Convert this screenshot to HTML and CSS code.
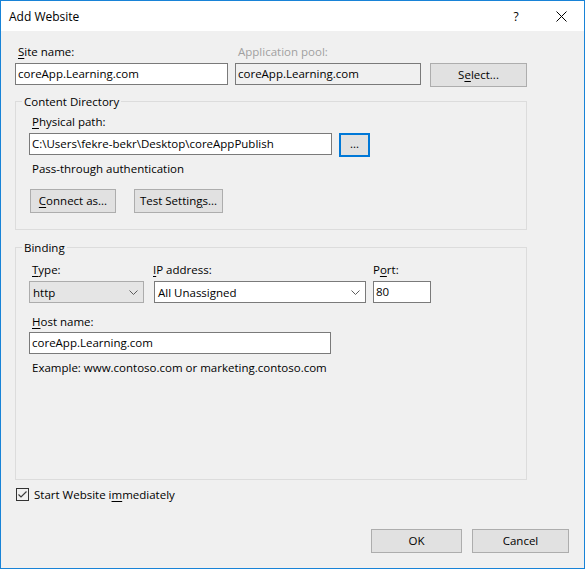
FILE: index.html
```html
<!DOCTYPE html>
<html>
<head>
<meta charset="utf-8">
<title>Add Website</title>
<link rel="stylesheet" href="styles.css">
</head>
<body>
<div class="window">
  <div class="titlebar">
    <div class="title">Add Website</div>
    <div class="tb-help">?</div>
    <div class="tb-close">
      <svg width="11" height="11" viewBox="0 0 11 11"><path d="M0.5 0.5 L10.5 10.5 M10.5 0.5 L0.5 10.5" stroke="#000" stroke-width="1" fill="none"/></svg>
    </div>
  </div>
  <div class="content">
    <div class="site-grid">
      <label class="lbl"><u>S</u>ite name:</label>
      <label class="lbl disabled">Application pool:</label>
      <span></span>
      <div class="field">coreApp.Learning.com</div>
      <div class="field readonly">coreApp.Learning.com</div>
      <div class="btn btn-select">S<u>e</u>lect...</div>
    </div>

    <fieldset class="group group-content">
      <legend class="legend">Content Directory</legend>
      <div class="group-body content-body">
        <label class="lbl"><u>P</u>hysical path:</label>
        <div class="path-row">
          <div class="field path-field">C:\Users\fekre-bekr\Desktop\coreAppPublish</div>
          <div class="btn btn-browse">...</div>
        </div>
        <div class="auth-text">Pass-through authentication</div>
        <div class="btn-row">
          <div class="btn btn-connect"><u>C</u>onnect as...</div>
          <div class="btn btn-test">Test Settin<u>g</u>s...</div>
        </div>
      </div>
    </fieldset>

    <fieldset class="group group-binding">
      <legend class="legend">Binding</legend>
      <div class="group-body binding-body">
        <div class="binding-grid">
          <label class="lbl"><u>T</u>ype:</label>
          <label class="lbl lbl-ip"><u>I</u>P address:</label>
          <label class="lbl lbl-port">P<u>o</u>rt:</label>
          <div class="combo combo-type"><span>http</span>
            <svg class="chev" width="9" height="5" viewBox="0 0 9 5"><path d="M0.5 0.5 L4.5 4.5 L8.5 0.5" stroke="#5c5c5c" fill="none"/></svg>
          </div>
          <div class="combo combo-ip"><span>All Unassigned</span>
            <svg class="chev" width="9" height="5" viewBox="0 0 9 5"><path d="M0.5 0.5 L4.5 4.5 L8.5 0.5" stroke="#5c5c5c" fill="none"/></svg>
          </div>
          <div class="field port-field">80</div>
        </div>
        <label class="lbl lbl-host"><u>H</u>ost name:</label>
        <div class="field host-field">coreApp.Learning.com</div>
        <div class="example">Example: www.contoso.com or marketing.contoso.com</div>
      </div>
    </fieldset>

    <div class="check-row">
      <span class="checkbox">
        <svg width="11" height="11" viewBox="0 0 11 11"><path d="M1.5 5.5 L4 8 L9.5 2.5" stroke="#3c3c3c" stroke-width="1.2" fill="none"/></svg>
      </span>
      <span>Start Website i<u>m</u>mediately</span>
    </div>

    <div class="footer">
      <div class="btn btn-ok">OK</div>
      <div class="btn btn-cancel">Cancel</div>
    </div>
  </div>
</div>
</body>
</html>
```

FILE: styles.css
```css
* { box-sizing: border-box; }
html, body { margin: 0; padding: 0; }
body {
  font-family: "Open Sans", "Noto Sans", sans-serif;
  font-size: 11.5px;
  color: #000;
  background: #f0f0f0;
}
u { text-decoration: underline; text-underline-offset: 2px; }

.window {
  width: 585px;
  height: 569px;
  border: 1px solid #1883d7;
  display: flex;
  flex-direction: column;
  background: #f0f0f0;
}

.titlebar {
  height: 30px;
  background: #fff;
  display: flex;
  align-items: center;
  padding-left: 8px;
  flex: none;
}
.title { flex: 1; font-size: 12px; }
.tb-help { width: 41px; text-align: center; font-size: 12px; padding-right: 3px; }
.tb-close { width: 46px; display: flex; justify-content: center; align-items: center; }

.content {
  flex: 1;
  display: flex;
  flex-direction: column;
  padding: 13px 15px 15px 14px;
}

.lbl { display: block; line-height: 15px; padding-left: 3px; }
.disabled { color: #a0a0a0; }

.site-grid {
  display: grid;
  width: 512px;
  grid-template-columns: 213px 186px 99px;
  column-gap: 7px;
  row-gap: 4px;
  align-items: start;
}

.field {
  height: 22px;
  line-height: 20px;
  border: 1px solid #7a7a7a;
  background: #fff;
  padding: 0 2px;
  white-space: nowrap;
  overflow: hidden;
}
.field.readonly { background: #f0f0f0; }

.btn {
  height: 24px;
  line-height: 22px;
  border: 1px solid #adadad;
  background: #e1e1e1;
  text-align: center;
  white-space: nowrap;
}
.btn-select { width: 97px; justify-self: end; }

.group {
  width: 512px;
  margin: 0;
  padding: 0;
  border: 1px solid #dcdcdc;
  min-inline-size: 0;
}
.legend {
  margin-left: 6px;
  padding: 0 2px;
  line-height: 15px;
}
.group-content { margin-top: 7px; height: 136px; }
.group-binding { margin-top: 10px; height: 240px; }

.group-body { padding: 5px 13px 0 13px; }
.content-body { padding-top: 5px; }
.binding-body { padding-top: 7px; }

.path-row {
  display: flex;
  gap: 7px;
  margin-top: 4px;
  align-items: flex-start;
}
.path-field { width: 303px; }
.btn-browse {
  width: 31px;
  border: 2px solid #0078d7;
  line-height: 18px;
}

.auth-text { margin-top: 4px; line-height: 15px; padding-left: 3px; }

.btn-row { display: flex; gap: 18px; margin-top: 13px; padding-left: 1px; }
.btn-connect { width: 86px; }
.btn-test { width: 89px; }

.binding-grid {
  display: grid;
  grid-template-columns: 115px 212px 58px;
  column-gap: 10px;
  row-gap: 4px;
}
.lbl-ip { padding-left: 0; margin-left: -1px; }
.lbl-port { padding-left: 0; margin-left: -3px; }
.port-field { margin-left: -3px; width: 58px; }

.combo {
  height: 22px;
  border: 1px solid #7a7a7a;
  background: #fff;
  display: flex;
  align-items: center;
  justify-content: space-between;
  padding: 0 5px 0 3px;
}
.combo-type { background: #e5e5e5; border-color: #acacac; }

.lbl-host { margin-top: 11px; }
.host-field { width: 302px; margin-top: 3px; }
.example { margin-top: 6px; line-height: 15px; padding-left: 3px; }

.check-row {
  display: flex;
  align-items: center;
  gap: 5px;
  margin-top: 7px;
  line-height: 15px;
}
.checkbox {
  width: 13px;
  height: 13px;
  border: 1px solid #333;
  display: flex;
  align-items: center;
  justify-content: center;
  margin-left: 1px;
}

.footer {
  margin-top: auto;
  display: flex;
  justify-content: flex-end;
  gap: 10px;
}
.btn-ok { width: 91px; }
.btn-cancel { width: 97px; }
```
